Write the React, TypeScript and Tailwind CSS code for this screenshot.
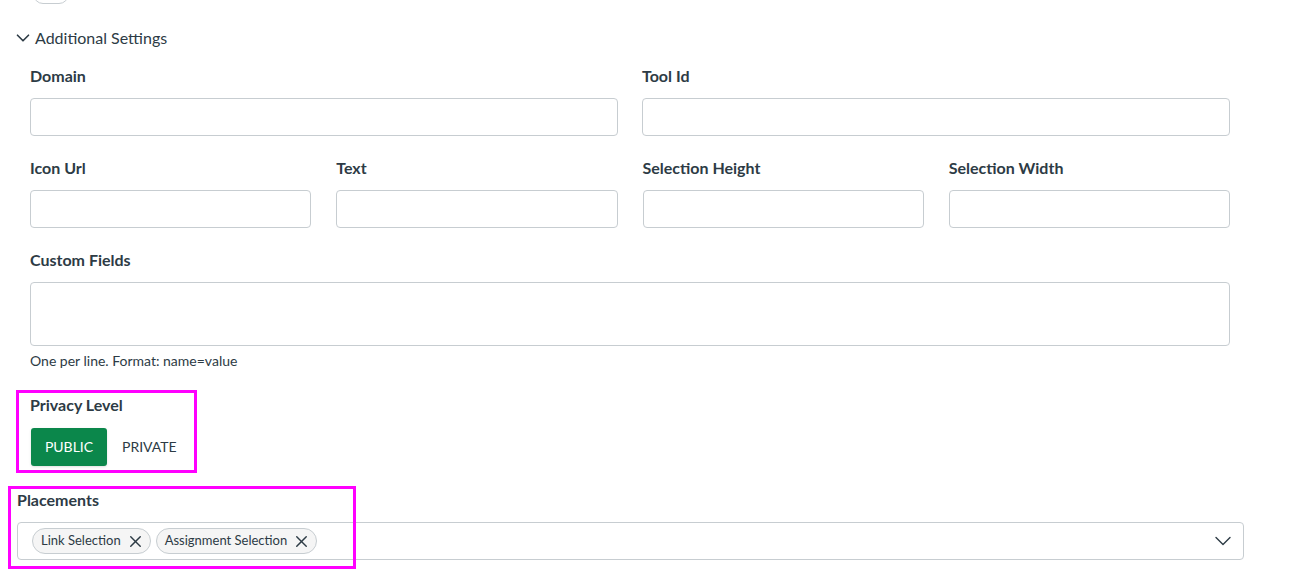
import { ChevronDown, X } from 'lucide-react';

const Label = ({ children, className = '' }: { children: React.ReactNode; className?: string }) => (
  <div className={`text-[16px] leading-5 font-bold text-[#2d3b45] ${className}`}>{children}</div>
);

const Input = () => (
  <input className="mt-3 block h-[38px] w-full rounded-[4px] border border-[#c7cdd1] bg-white outline-none" />
);

const Chip = ({ label }: { label: string }) => (
  <span className="flex h-[26px] items-center rounded-full border border-[#c7cdd1] bg-[#f5f5f5] pl-[8px] pr-[5px] text-[13px] text-[#2d3b45]">
    {label}
    <X className="ml-[5px] h-[19px] w-[19px]" strokeWidth={1.8} />
  </span>
);

export default function App() {
  return (
    <div className="relative h-[578px] w-[1295px] overflow-hidden bg-white font-['Lato','Liberation_Sans',sans-serif] text-[#2d3b45]">
      {/* toggle clipped at top */}
      <div className="ml-[33px] -mt-[16px] h-[20px] w-[36px] rounded-full border border-[#c7cdd1] bg-white" />

      <div className="mt-[22px] flex h-6 items-center pl-[12px]">
        <ChevronDown className="h-[22px] w-[22px] text-[#2d3b45]" strokeWidth={1.8} />
        <span className="ml-[1px] text-[16px] leading-6 text-[#2d3b45]">Additional Settings</span>
      </div>

      <div className="ml-[30px] w-[1200px]">
        <div className="mt-[16px] grid grid-cols-2 gap-x-[24px]">
          <div>
            <Label>Domain</Label>
            <Input />
          </div>
          <div>
            <Label>Tool Id</Label>
            <Input />
          </div>
        </div>

        <div className="mt-[22px] grid grid-cols-4 gap-x-[25px]">
          <div>
            <Label>Icon Url</Label>
            <Input />
          </div>
          <div>
            <Label>Text</Label>
            <Input />
          </div>
          <div>
            <Label>Selection Height</Label>
            <Input />
          </div>
          <div>
            <Label>Selection Width</Label>
            <Input />
          </div>
        </div>

        <div className="mt-[22px]">
          <Label>Custom Fields</Label>
          <textarea className="mt-3 block h-[64px] w-full resize-none rounded-[4px] border border-[#c7cdd1] bg-white outline-none" />
          <div className="mt-[6px] text-[14px] leading-[18px] text-[#2d3b45]">One per line. Format: name=value</div>
        </div>

        <div className="mt-[25px]">
          <Label>Privacy Level</Label>
          <div className="mt-[13px] flex items-center pl-px">
            <button className="h-[38px] w-[76px] rounded-[3px] bg-[#0b874b] pb-px text-[14px] text-white shadow-sm">PUBLIC</button>
            <button className="ml-[15px] h-[38px] pb-[2px] text-[14px] text-[#2d3b45]">PRIVATE</button>
          </div>
        </div>
      </div>

      <div className="ml-[17px] mt-[24px] w-[1227px]">
        <Label>Placements</Label>
        <div className="mt-3 flex h-[38px] items-center rounded-[4px] border border-[#c7cdd1] bg-white pl-[14px] pr-[6px]">
          <div className="flex flex-1 items-center gap-[5px]">
            <Chip label="Link Selection" />
            <Chip label="Assignment Selection" />
          </div>
          <ChevronDown className="h-[28px] w-[28px] text-[#2d3b45]" strokeWidth={1.2} />
        </div>
      </div>

      {/* annotation overlays */}
      <div className="pointer-events-none absolute left-[16px] top-[390px] h-[83px] w-[181px] border-[3px] border-[#ff00ff]" />
      <div className="pointer-events-none absolute left-[8px] top-[486px] h-[83px] w-[348px] border-[3px] border-[#ff00ff]" />
    </div>
  );
}
